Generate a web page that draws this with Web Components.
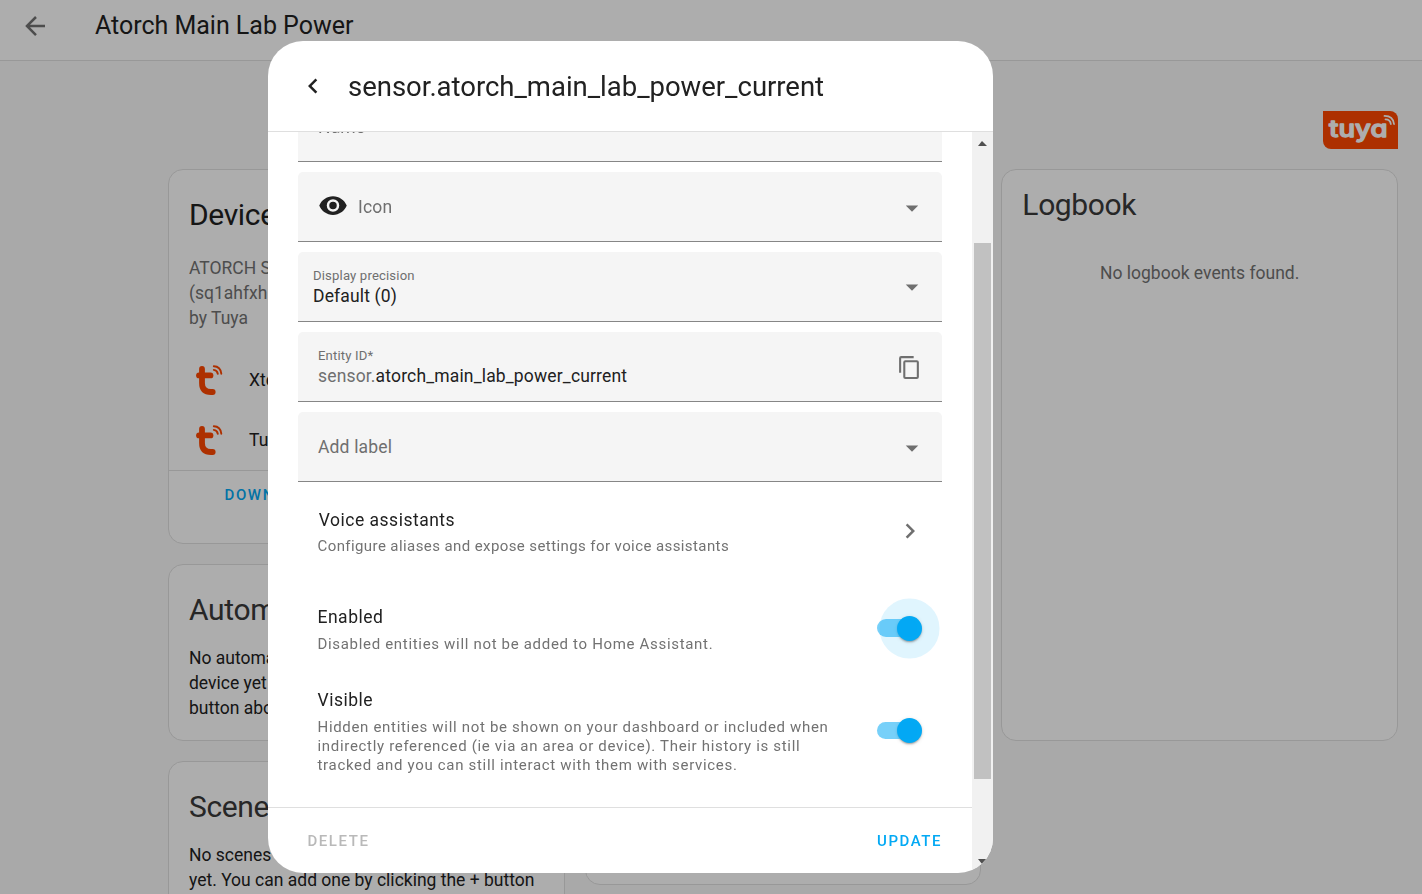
<!DOCTYPE html>
<html lang="en">
<head>
<meta charset="utf-8">
<title>Atorch Main Lab Power</title>
<style>
html,body{margin:0;height:100%;overflow:hidden}
body{font:17.5px/25px Roboto,"Noto Sans",sans-serif;color:#212121;background:#fafafa}
</style>
</head>
<body>
<device-page></device-page>
<entity-dialog></entity-dialog>
<script>
const define = (name, html) => {
  const t = document.createElement('template');
  t.innerHTML = html;
  customElements.define(name, class extends HTMLElement {
    constructor() {
      super();
      this.attachShadow({ mode: 'open' }).append(t.content.cloneNode(true));
    }
  });
};

const ICONS = {
  back: 'M20,11V13H8L13.5,18.5L12.08,19.92L4.16,12L12.08,4.08L13.5,5.5L8,11H20Z',
  left: 'M15.41,16.58L10.83,12L15.41,7.41L14,6L8,12L14,18L15.41,16.58Z',
  right: 'M8.59,16.58L13.17,12L8.59,7.41L10,6L16,12L10,18L8.59,16.58Z',
  down: 'M7,10L12,15L17,10H7Z',
  eye: 'M12,9A3,3 0 0,0 9,12A3,3 0 0,0 12,15A3,3 0 0,0 15,12A3,3 0 0,0 12,9M12,17A5,5 0 0,1 7,12A5,5 0 0,1 12,7A5,5 0 0,1 17,12A5,5 0 0,1 12,17M12,4.5C7,4.5 2.73,7.61 1,12C2.73,16.39 7,19.5 12,19.5C17,19.5 21.27,16.39 23,12C21.27,7.61 17,4.5 12,4.5Z',
  copy: 'M19,21H8V7H19M19,5H8A2,2 0 0,0 6,7V21A2,2 0 0,0 8,23H19A2,2 0 0,0 21,21V7A2,2 0 0,0 19,5M16,1H4A2,2 0 0,0 2,3V17H4V3H16V1Z'
};
customElements.define('ui-icon', class extends HTMLElement {
  constructor() {
    super();
    this.attachShadow({ mode: 'open' });
  }
  connectedCallback() {
    this.shadowRoot.innerHTML = `<style>:host{display:block;flex:none;width:var(--size,30px);height:var(--size,30px)}svg{display:block;width:100%;height:100%;fill:currentColor}</style>
    <svg viewBox="0 0 24 24"><path d="${ICONS[this.getAttribute('name')]}"/></svg>`;
  }
});

define('tuya-logo', `<style>:host{display:block;width:75px;height:38px}svg{display:block}</style>
<svg width="75" height="38" viewBox="0 0 75 38">
<path fill="#ff4800" d="M0 0H67A8 8 0 0 1 75 8V38H8A8 8 0 0 1 0 30Z"/>
<text x="6" y="26.300" textLength="58.500" lengthAdjust="spacingAndGlyphs" font-family="Inter,Roboto,sans-serif" font-weight="500" font-size="23.500" fill="#fff" stroke="#fff" stroke-width="1.300" stroke-linejoin="round" style="font-feature-settings:'cv11'">tuya</text>
<g fill="none" stroke="#fff" stroke-width="1.800" stroke-linecap="round"><path d="M61.500 4.900Q70 4.800 71 13"/><path d="M62.500 8.300Q67.300 8.300 67.800 13"/></g>
</svg>`);

define('tuya-mark', `<style>:host{display:block;flex:none;width:30px;height:32px}svg{display:block}</style>
<svg width="30" height="32" viewBox="0 0 30 32" fill="none" stroke="#ff4800" stroke-linecap="round">
<g stroke-width="5.800" stroke-linejoin="round"><path d="M7 4V18Q7 27 16 27H17.700"/><path d="M4 10.400H15.500"/></g>
<g stroke-width="1.900"><path d="M18.800 1.300Q25.500 1.500 26.300 8.700"/><path d="M18.800 4.900Q22.300 5.300 22.800 8.800"/></g>
</svg>`);

define('ha-card', `<style>
:host{display:block;box-sizing:border-box;background:#fff;border:1px solid #e0e0e0;border-radius:15px;overflow:hidden}
h1{margin:0;padding:var(--head,30px) 20px 0;font-size:30px;line-height:30px;font-weight:400;letter-spacing:-.36px;white-space:nowrap;color:var(--title,#3a3a3a)}
::slotted(*){white-space:nowrap}
</style><h1><slot name="title"></slot></h1><slot></slot>`);

define('device-page', `<style>
:host{display:flex;flex-direction:column;height:100%;overflow:hidden}
header{flex:none;box-sizing:border-box;height:61px;padding-bottom:9px;border-bottom:1px solid #e0e0e0;background:#fff;display:flex;align-items:center;padding-left:20px;gap:45px;color:#727272}
header h2{margin:0;font-size:25px;font-weight:400;line-height:30px;color:#212121;letter-spacing:-.02px}
main{flex:1;min-height:0;overflow:hidden;padding:50px 24px 0 168px}
.logo{display:flex;justify-content:flex-end;height:58px}
.cols{display:grid;grid-template-columns:repeat(3,minmax(0,1fr));gap:20px;align-items:start}
.col{display:flex;flex-direction:column;gap:20.300px}
.info{height:375px;--title:#212121}.auto{height:176.500px}.scenes{height:260px}.dash{height:716px}
.log{height:572px;--head:20px}
.model{padding:26px 20px 0;color:#727272}
.row{display:flex;align-items:center;height:60px;padding-left:26px;gap:24px;color:#212121}
.first{margin-top:19.500px}
.act{border-top:1px solid #e0e0e0;height:48px;margin-top:-1px;padding-left:55.500px;font-size:15px;font-weight:500;letter-spacing:1.600px;line-height:48px;color:#03a9f4}
.body{padding:21px 20px 0;line-height:25px}
.none{padding-top:41px;text-align:center;color:#727272}
</style>
<header><ui-icon name="back"></ui-icon><h2>Atorch Main Lab Power</h2></header>
<main><div class="logo"><tuya-logo></tuya-logo></div>
<div class="cols">
<div class="col">
<ha-card class="info"><span slot="title">Device info</span>
<div class="model">ATORCH S<br>(sq1ahfxh<br>by Tuya</div>
<div class="row first"><tuya-mark></tuya-mark><span>Xtend</span></div>
<div class="row"><tuya-mark></tuya-mark><span>Tuya</span></div>
<div class="act">DOWN</div></ha-card>
<ha-card class="auto"><span slot="title">Autom</span><div class="body">No automa<br>device yet<br>button abo</div></ha-card>
<ha-card class="scenes"><span slot="title">Scenes</span><div class="body">No scenes<br>yet. You can add one by clicking the + button</div></ha-card>
</div>
<div class="col"><ha-card class="dash"></ha-card></div>
<div class="col"><ha-card class="log"><span slot="title">Logbook</span><div class="none">No logbook events found.</div></ha-card></div>
</div></main>`);

define('entity-field', `<style>
:host{flex:none;box-sizing:border-box;display:flex;align-items:center;height:70px;margin-bottom:10px;padding:2px 15px 0 var(--inset,20px);background:#f5f5f5;border-bottom:1px solid #868686;border-radius:5px 5px 0 0;letter-spacing:.16px;color:#6f6f6f}
.text{flex:1;min-width:0}
.label{font-size:13.125px;line-height:18px}
.label,.value{display:block}
.value{line-height:23px}
.value ::slotted(b){font-weight:400;color:#212121}
</style><slot name="lead"></slot><div class="text"><span class="label"><slot name="label"></slot></span><span class="value"><slot></slot></span></div><slot name="trail"></slot>`);

define('ui-switch', `<style>
:host{flex:none;display:grid;align-items:center;width:45px;height:25px}
.track,.thumb{grid-area:1/1}
.track{width:40px;height:17.500px;border-radius:9px;background:#03a9f4;opacity:.54}
.thumb{justify-self:end;width:25px;height:25px;border-radius:50%;background:#03a9f4;box-shadow:0 2px 2px -1px rgba(0,0,0,.2),0 1px 2px rgba(0,0,0,.14),0 1px 4px rgba(0,0,0,.12)}
:host([focused]) .thumb{box-shadow:0 2px 2px -1px rgba(0,0,0,.2),0 1px 2px rgba(0,0,0,.14),0 1px 4px rgba(0,0,0,.12),0 0 0 17.500px rgba(3,169,244,.12)}
</style><div class="track"></div><div class="thumb"></div>`);

define('settings-row', `<style>
:host{flex:none;display:flex;align-items:center;justify-content:space-between;padding:0 20px 0 19.500px}
.head{line-height:24px;letter-spacing:.5px;color:#212121;padding-left:var(--nudge,0)}
.desc{font-size:15px;line-height:19px;letter-spacing:var(--track,.680px);color:#727272;white-space:nowrap;margin-top:var(--gap,6px)}
</style><div><div class="head"><slot name="head"></slot></div><div class="desc"><slot></slot></div></div><slot name="control"></slot>`);

define('scroll-bar', `<style>
:host{flex:none;box-sizing:border-box;width:21px;background:#f1f1f1;display:flex;flex-direction:column;align-items:flex-start;padding:9px 0 9px}
i{display:block;width:0;height:0;margin-left:6px;border:4.500px solid transparent;border-width:0 5px 5px 4px;border-bottom-color:#505050}
i.d{border-width:5px 5px 0 4px;border-top-color:#505050;margin-top:auto}
div{width:17px;height:536px;margin:97px 0 0 2px;background:#c1c1c1}
</style><i></i><div></div><i class="d"></i>`);

define('entity-dialog', `<style>
:host{position:fixed;inset:0;display:flex;background:rgba(0,0,0,.32)}
.dialog{width:725px;height:832px;margin:41px 0 0 268px;border-radius:35px;background:#fff;overflow:hidden;display:flex;flex-direction:column}
header{flex:none;height:90px;display:flex;align-items:center;padding-left:30px;gap:20px;border-bottom:1px solid #dfdfdf}
h2{margin:0;padding-top:2px;font-size:27.500px;line-height:36px;font-weight:400;letter-spacing:-.02px}
.wrap{flex:1;min-height:0;display:flex}
.left{flex:1;min-width:0;display:flex;flex-direction:column}
.form{flex:1;min-height:0;overflow:hidden;padding:0 30px;display:flex;flex-direction:column}
entity-field:first-child{margin-top:-40px}
footer{flex:none;box-sizing:border-box;height:66px;border-top:1px solid #dfdfdf;display:flex;justify-content:space-between;align-items:center;padding:2px 30px 0 39.500px;font-size:15px;font-weight:500;letter-spacing:1.550px}
.del{color:#b9b9b9}.upd{color:#03a9f4}
.prec{--inset:15px}
.prec ui-icon{margin-top:-2px}
.eye{color:#212121;margin-right:10px;transform:translateY(-2.500px)}
.copy{--size:25px;margin-right:5px}
.voice{margin-top:14px;--track:.41px;--gap:5px;--nudge:1.300px;height:51px}
.en{margin-top:45px;height:54px}
.vis{margin-top:29px;height:92px}
.chev{color:#6f6f6f;margin:-2px -2.800px 0 0}
.en ui-switch{margin-top:-2px}
.vis ui-switch{margin-top:-1px}
</style>
<div class="dialog">
<header><ui-icon name="left"></ui-icon><h2>sensor.atorch_main_lab_power_current</h2></header>
<div class="wrap"><div class="left"><div class="form">
<entity-field>Name</entity-field>
<entity-field><ui-icon class="eye" slot="lead" name="eye"></ui-icon>Icon<ui-icon slot="trail" name="down"></ui-icon></entity-field>
<entity-field class="prec"><span slot="label">Display precision</span><b>Default (0)</b><ui-icon slot="trail" name="down"></ui-icon></entity-field>
<entity-field><span slot="label">Entity ID*</span>sensor.<b>atorch_main_lab_power_current</b><ui-icon class="copy" slot="trail" name="copy"></ui-icon></entity-field>
<entity-field>Add label<ui-icon slot="trail" name="down"></ui-icon></entity-field>
<settings-row class="voice"><span slot="head">Voice assistants</span>Configure aliases and expose settings for voice assistants<ui-icon class="chev" slot="control" name="right"></ui-icon></settings-row>
<settings-row class="en"><span slot="head">Enabled</span>Disabled entities will not be added to Home Assistant.<ui-switch slot="control" focused></ui-switch></settings-row>
<settings-row class="vis"><span slot="head">Visible</span>Hidden entities will not be shown on your dashboard or included when<br>indirectly referenced (ie via an area or device). Their history is still<br>tracked and you can still interact with them with services.<ui-switch slot="control"></ui-switch></settings-row>
</div><footer><span class="del">DELETE</span><span class="upd">UPDATE</span></footer></div>
<scroll-bar></scroll-bar></div>
</div>`);
</script>
</body>
</html>
